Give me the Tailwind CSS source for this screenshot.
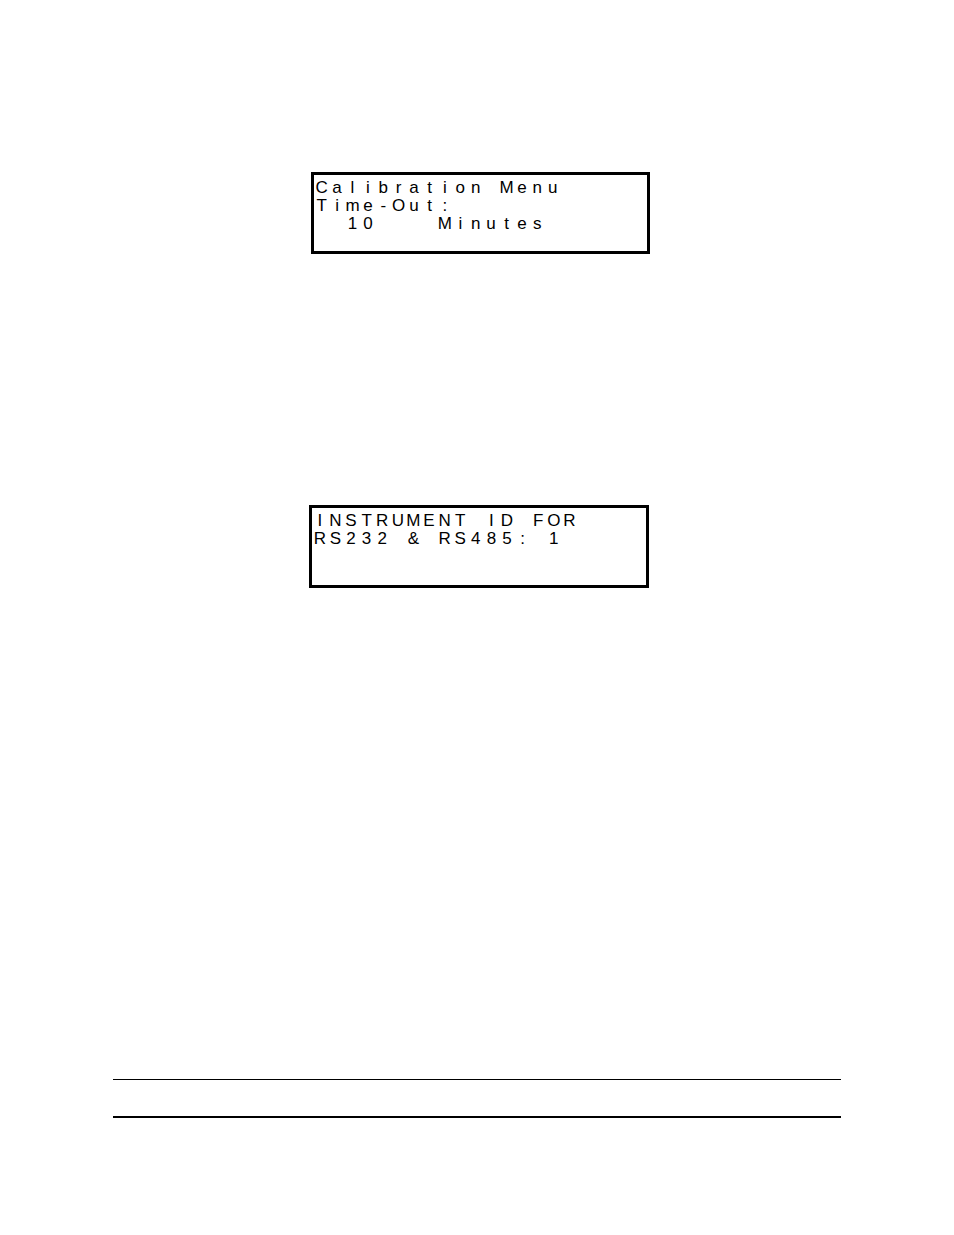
<!DOCTYPE html>
<html lang="en">
<head>
<meta charset="utf-8">
<meta name="viewport" content="width=device-width, initial-scale=1">
<title>Instrument display screens</title>
<script src="https://cdn.jsdelivr.net/npm/@tailwindcss/browser@4"></script>
</head>
<body class="bg-white text-black">
<main class="flex min-h-screen flex-col px-[113px] pt-[172px] pb-[117px]">
  <section aria-label="Calibration menu time-out" class="ml-[198px] w-[339px] border-3 border-black pt-[4px] pb-[18px] font-['Liberation_Sans',sans-serif] text-[17px] leading-[18px]">
    <p class="grid w-[308px] grid-cols-20 text-center"><span>C</span><span>a</span><span>l</span><span>i</span><span>b</span><span>r</span><span>a</span><span>t</span><span>i</span><span>o</span><span>n</span><span> </span><span>M</span><span>e</span><span>n</span><span>u</span></p>
    <p class="grid w-[308px] grid-cols-20 text-center"><span>T</span><span>i</span><span>m</span><span>e</span><span>-</span><span>O</span><span>u</span><span>t</span><span>:</span></p>
    <p class="grid w-[308px] grid-cols-20 text-center"><span> </span><span> </span><span>1</span><span>0</span><span> </span><span> </span><span> </span><span> </span><span>M</span><span>i</span><span>n</span><span>u</span><span>t</span><span>e</span><span>s</span></p>
  </section>

  <section aria-label="Instrument ID" class="mt-[251px] ml-[196px] w-[340px] border-3 border-black pt-[4px] pb-[37px] font-['Liberation_Sans',sans-serif] text-[17px] leading-[18px]">
    <p class="grid w-[312px] grid-cols-20 text-center"><span>I</span><span>N</span><span>S</span><span>T</span><span>R</span><span>U</span><span>M</span><span>E</span><span>N</span><span>T</span><span> </span><span>I</span><span>D</span><span> </span><span>F</span><span>O</span><span>R</span></p>
    <p class="grid w-[312px] grid-cols-20 text-center"><span>R</span><span>S</span><span>2</span><span>3</span><span>2</span><span> </span><span>&amp;</span><span> </span><span>R</span><span>S</span><span>4</span><span>8</span><span>5</span><span>:</span><span> </span><span>1</span></p>
  </section>

  <footer class="mt-auto h-[39px] border-t border-b-2 border-black"></footer>
</main>
</body>
</html>
